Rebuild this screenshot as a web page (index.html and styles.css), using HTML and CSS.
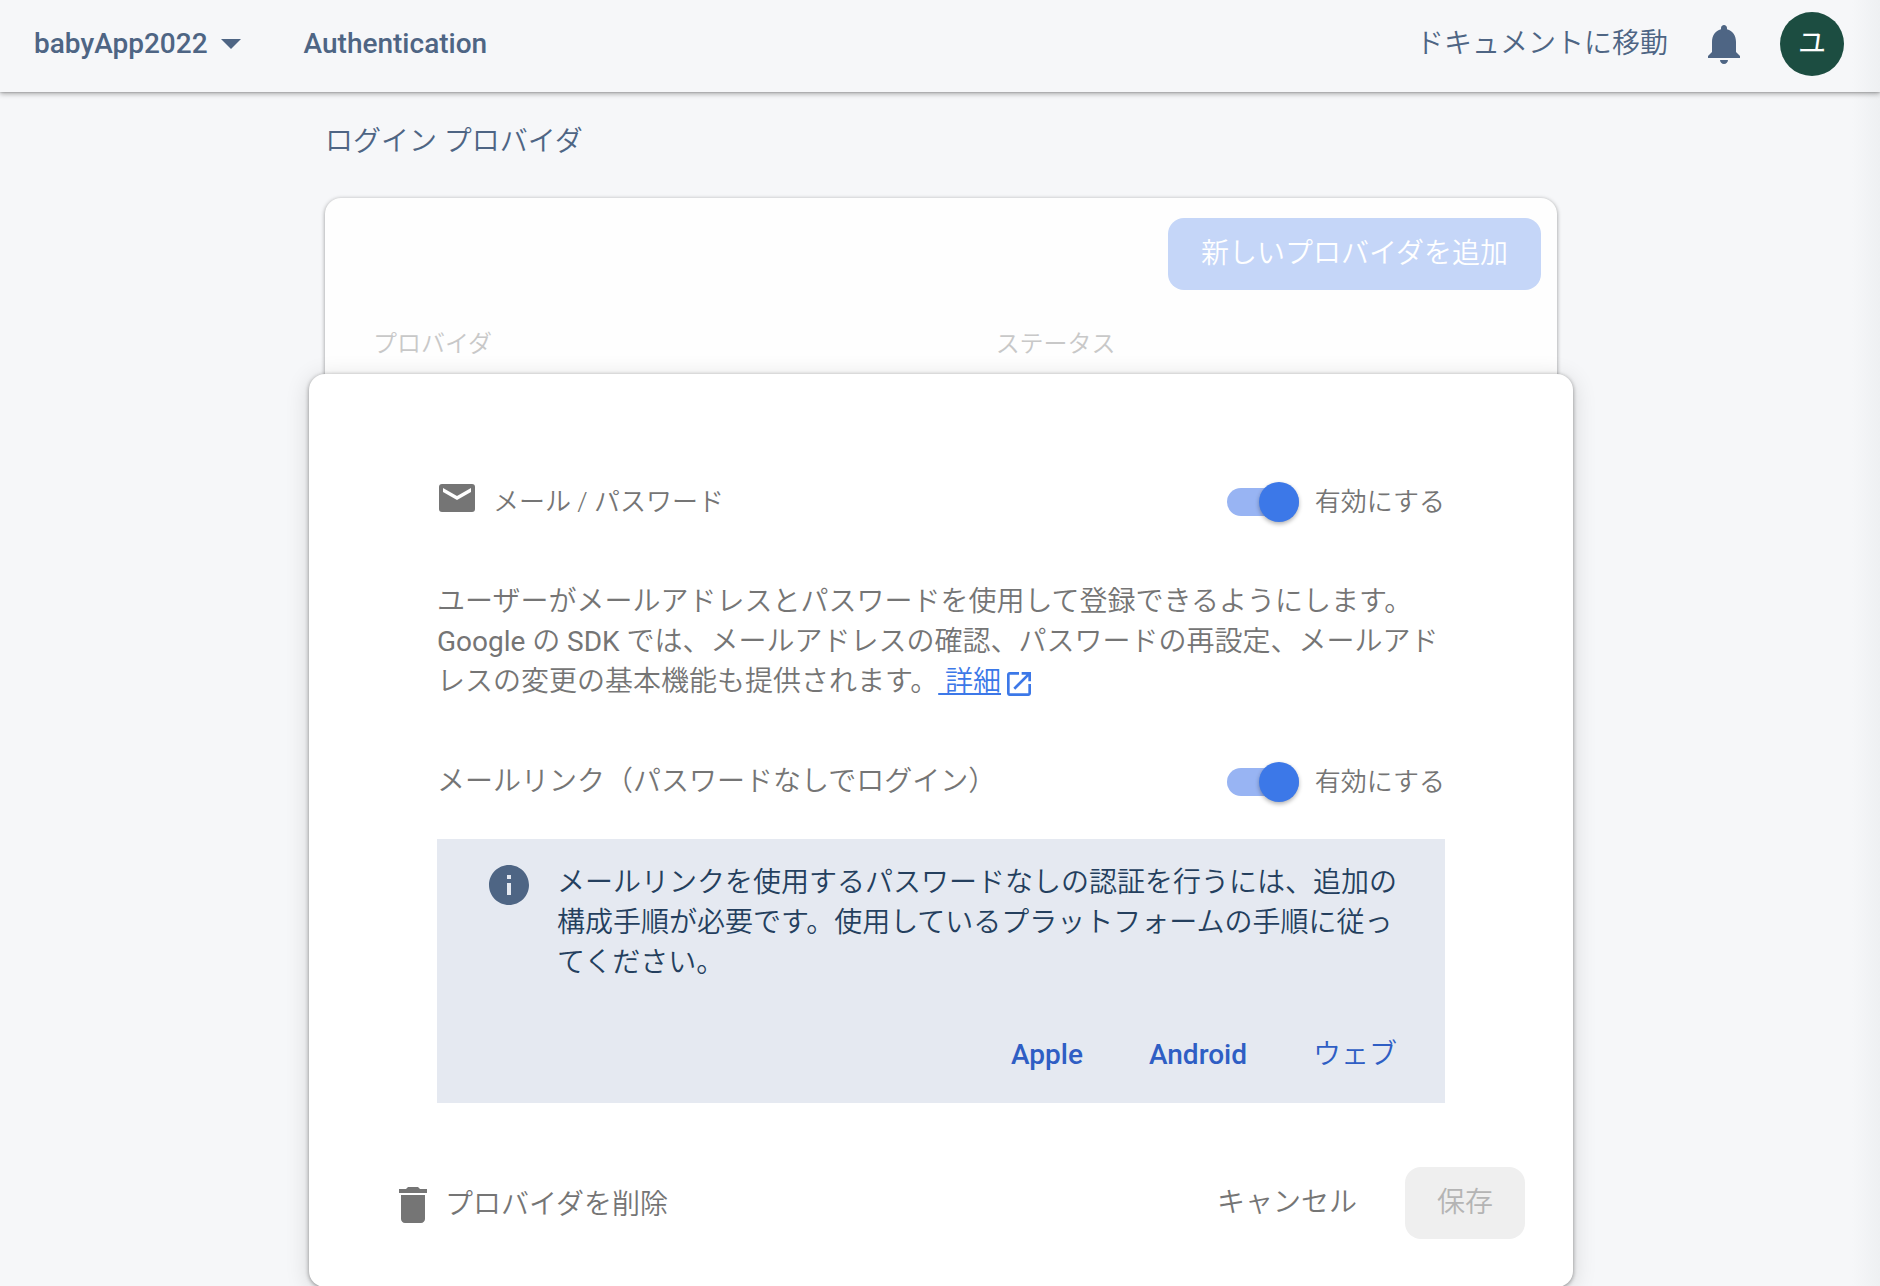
FILE: index.html
```html
<!DOCTYPE html>
<html lang="ja">
<head>
    <meta charset="UTF-8">
    <meta name="viewport" content="width=device-width, initial-scale=1.0">
    <title>Authentication - babyApp2022</title>
    <link rel="stylesheet" href="styles.css">
</head>
<body>

<header class="topbar">
    <button type="button" class="project-button">
        babyApp2022
        <svg class="caret" viewBox="0 0 20 10" aria-hidden="true"><path d="M0 0h20L10 10z"/></svg>
    </button>
    <a class="topbar-link product-link" href="#">Authentication</a>
    <a class="topbar-link docs-link" href="#">ドキュメントに移動</a>
    <button type="button" class="icon-button" aria-label="通知">
        <svg class="icon" viewBox="0 0 24 24"><path d="M12 22c1.1 0 2-.9 2-2h-4c0 1.1.89 2 2 2zm6-6v-5c0-3.07-1.64-5.64-4.5-6.32V4c0-.83-.67-1.5-1.5-1.5s-1.5.67-1.5 1.5v.68C7.63 5.36 6 7.92 6 11v5l-2 2v1h16v-1l-2-2z"/></svg>
    </button>
    <button type="button" class="avatar">ユ</button>
</header>

<main class="content">
    <h1 class="section-title">ログイン プロバイダ</h1>

    <section class="card">
        <div class="card-actions">
            <button type="button" class="button add-button" disabled>新しいプロバイダを追加</button>
        </div>
        <table class="provider-table">
            <thead>
                <tr>
                    <th class="col-provider" scope="col">プロバイダ</th>
                    <th class="col-status" scope="col">ステータス</th>
                </tr>
            </thead>
        </table>

        <form class="editor">
            <div class="editor-body">
                <div class="setting-row">
                    <div class="provider-name">
                        <svg class="mail-icon" viewBox="0 0 36 28" aria-hidden="true"><rect width="36" height="28" rx="3"/><path class="mail-flap" d="M4 4l14 8 14-8v4l-14 8L4 8z"/></svg>
                        <span>メール / パスワード</span>
                    </div>
                    <label class="toggle">
                        <input type="checkbox" name="email_enabled" checked>
                        <span>有効にする</span>
                    </label>
                </div>

                <p class="description">ユーザーがメールアドレスとパスワードを使用して登録できるようにします。<span lang="en">Google</span> の <span lang="en">SDK</span> では、メールアドレスの確認、パスワードの再設定、メールアドレスの変更の基本機能も提供されます。<a class="more-link" href="#"> 詳細<svg class="open-icon" viewBox="3 3 18 18" aria-hidden="true"><path d="M19 19H5V5h7V3H5c-1.11 0-2 .9-2 2v14c0 1.1.89 2 2 2h14c1.1 0 2-.9 2-2v-7h-2v7zM14 3v2h3.59l-9.83 9.83 1.41 1.41L19 6.41V10h2V3h-7z"/></svg></a></p>

                <div class="setting-row">
                    <span class="setting-name">メールリンク（パスワードなしでログイン）</span>
                    <label class="toggle">
                        <input type="checkbox" name="link_enabled" checked>
                        <span>有効にする</span>
                    </label>
                </div>

                <div class="notice">
                    <svg class="icon notice-icon" viewBox="0 0 24 24" aria-hidden="true"><path d="M12 2C6.48 2 2 6.48 2 12s4.48 10 10 10 10-4.48 10-10S17.52 2 12 2zm1 15h-2v-6h2v6zm0-8h-2V7h2v2z"/></svg>
                    <div class="notice-content">
                        <p class="notice-text">メールリンクを使用するパスワードなしの認証を行うには、追加の構成手順が必要です。使用しているプラットフォームの手順に従ってください。</p>
                        <nav class="notice-links">
                            <a href="#" lang="en">Apple</a>
                            <a href="#" lang="en">Android</a>
                            <a href="#">ウェブ</a>
                        </nav>
                    </div>
                </div>
            </div>

            <div class="editor-footer">
                <button type="button" class="delete-button">
                    <svg class="delete-icon" viewBox="5 3 14 18" aria-hidden="true"><path d="M6 19c0 1.1.9 2 2 2h8c1.1 0 2-.9 2-2V7H6v12zM19 4h-3.5l-1-1h-5l-1 1H5v2h14V4z"/></svg>
                    プロバイダを削除
                </button>
                <button type="button" class="button cancel-button">キャンセル</button>
                <button type="submit" class="button save-button" disabled>保存</button>
            </div>
        </form>
    </section>
</main>

</body>
</html>
```
FILE: styles.css
```css
* {
    box-sizing: border-box;
}
body {
    margin: 0;
    background: linear-gradient(to left, #eef0f2, #f6f7f9 28px);
    color: #757575;
    font-family: Roboto, "Noto Sans CJK JP", sans-serif;
    font-size: 28px;
    font-weight: 350;
    line-height: 40px;
}
button {
    padding: 0;
    border: none;
    background: none;
    color: inherit;
    font: inherit;
    cursor: pointer;
}
a {
    color: inherit;
    text-decoration: none;
}
svg {
    fill: currentColor;
    flex: none;
}
.icon {
    display: block;
    width: 48px;
    height: 48px;
}

/* top bar */
.topbar {
    display: flex;
    align-items: center;
    gap: 32px;
    height: 92px;
    padding: 0 36px 4px 34px;
    color: #4e6584;
    box-shadow: 0 0 2px rgba(0, 0, 0, 0.3), 0 2px 5px rgba(0, 0, 0, 0.3);
}
.project-button {
    display: flex;
    align-items: center;
    gap: 13px;
    margin-right: 31px;
    font-weight: 500;
}
.caret {
    width: 20px;
    height: 10px;
}
.product-link {
    font-weight: 500;
}
.docs-link {
    margin-left: auto;
}
.avatar {
    width: 64px;
    height: 64px;
    border-radius: 50%;
    background-color: #1c4d41;
    color: #fff;
    font-weight: 400;
}

/* provider list */
.content {
    max-width: 1234px;
    margin: 0 auto;
    padding-left: 2px;
}
.section-title {
    margin: 0;
    padding: 30px 0 36px;
    color: #4e6584;
    font-size: 28px;
    font-weight: 350;
}
.card {
    padding-top: 20px;
    border-radius: 16px;
    background-color: #fefefe;
    box-shadow: 0 1px 4px rgba(0, 0, 0, 0.4);
}
.card-actions {
    display: flex;
    justify-content: flex-end;
    padding-right: 16px;
}
.button {
    height: 72px;
    padding: 0 32px;
    border-radius: 16px;
}
.add-button {
    padding: 0 33px;
    background-color: #c5d6f8;
    color: #fff;
}
.provider-table {
    width: 100%;
    border-collapse: collapse;
    table-layout: fixed;
}
.provider-table th {
    padding: 34px 0 10px;
    color: #c8c8c8;
    font-size: 24px;
    font-weight: 350;
    text-align: left;
}
.provider-table .col-provider {
    width: 52%;
    padding-left: 48px;
}
.provider-table .col-status {
    padding-left: 30px;
}

/* expanded provider editor, wider than the list it opens in */
.editor {
    margin: 0 -16px;
    padding-bottom: 48px;
    border-radius: 16px;
    background-color: #fff;
    box-shadow: 0 1px 4px rgba(0, 0, 0, 0.4), 0 4px 24px rgba(0, 0, 0, 0.14);
}
.editor-body {
    padding: 108px 128px 64px;
}
.setting-row {
    display: flex;
    align-items: center;
    justify-content: space-between;
}
.provider-name {
    display: flex;
    align-items: center;
    gap: 18px;
    padding-left: 2px;
    font-size: 26px;
}
.mail-icon {
    width: 36px;
    height: 28px;
    margin-bottom: 8px;
}
.mail-flap {
    fill: #fff;
}
.toggle {
    display: flex;
    align-items: center;
    gap: 16px;
    font-size: 26px;
    cursor: pointer;
}
.toggle input {
    display: flex;
    align-items: center;
    width: 72px;
    height: 28px;
    margin: 0;
    border-radius: 14px;
    background-color: #ccc;
    appearance: none;
}
.toggle input::before {
    content: "";
    width: 40px;
    height: 40px;
    border-radius: 50%;
    background-color: #fafafa;
    box-shadow: 0 2px 4px rgba(0, 0, 0, 0.3);
}
.toggle input:checked {
    justify-content: flex-end;
    background-color: #98b4f3;
}
.toggle input:checked::before {
    background-color: #3c78e8;
}
.description {
    margin: 60px 0;
}
.description [lang="en"] {
    font-weight: 400;
}
.more-link {
    color: #3c78e8;
    text-decoration: underline;
}
.open-icon {
    width: 24px;
    height: 24px;
    margin-left: 6px;
    vertical-align: -5px;
}
.notice {
    display: flex;
    gap: 24px;
    margin-top: 37px;
    padding: 22px 40px 28px 48px;
    background-color: #e5e9f1;
    color: #243f5e;
}
.notice-icon {
    color: #4e6584;
}
.notice-content {
    flex: 1;
}
.notice-text {
    margin: 0;
    padding: 2px 0 52px;
}
.notice-links {
    display: flex;
    justify-content: flex-end;
    gap: 66px;
    padding-right: 8px;
    color: #2f5ec4;
}
.notice-links [lang="en"] {
    font-weight: 500;
}
.editor-footer {
    display: flex;
    align-items: center;
    gap: 16px;
    padding: 0 48px 0 90px;
}
.delete-button {
    display: flex;
    align-items: center;
    gap: 18px;
    margin-right: auto;
    padding-top: 3px;
}
.delete-icon {
    width: 28px;
    height: 36px;
}
.save-button {
    background-color: #efefef;
    color: #b4b4b4;
}
```
